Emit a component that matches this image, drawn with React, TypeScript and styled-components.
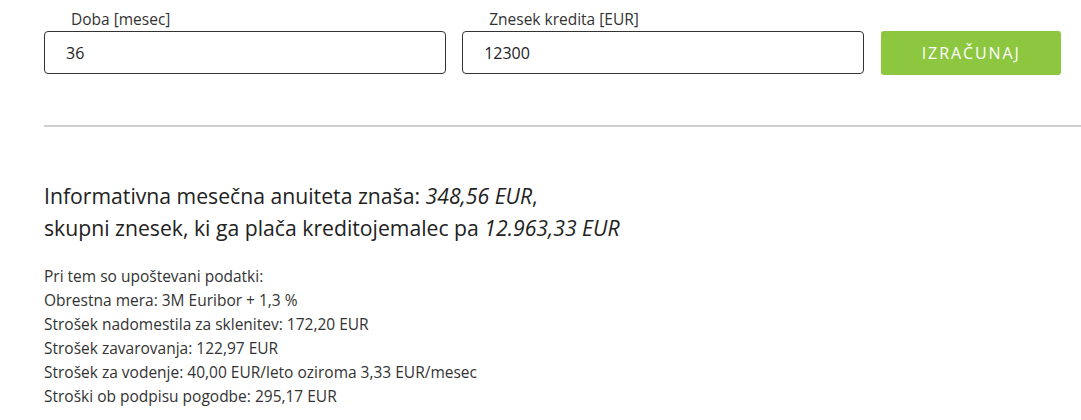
import React from "react";
import styled, { createGlobalStyle } from "styled-components";

const GlobalStyle = createGlobalStyle`
  body {
    margin: 0;
    background: #fff;
    font-family: "Open Sans", "Liberation Sans", sans-serif;
    color: #333;
  }
`;

const Page = styled.div`
  padding: 9px 0 0 44px;
`;

const FormRow = styled.div`
  display: flex;
  align-items: flex-end;
  gap: 16px;
  padding-right: 20px;
`;

const Field = styled.div`
  display: flex;
  flex-direction: column;
  width: 403px;
`;

const Label = styled.label`
  font-size: 15.5px;
  line-height: 20px;
  padding-left: 27px;
  margin-bottom: 2px;
  color: #333;
`;

const Input = styled.input`
  box-sizing: border-box;
  height: 43px;
  border: 1px solid #333;
  border-radius: 4px;
  padding: 0 21px;
  font-family: "Open Sans", "Liberation Sans", sans-serif;
  font-size: 16px;
  color: #222;
  outline: none;
`;

const Button = styled.button`
  box-sizing: border-box;
  width: 180px;
  height: 44px;
  margin-left: 1px;
  margin-bottom: -1px;
  border: none;
  border-radius: 3px;
  background: #8dc63f;
  color: #fff;
  font-family: "Open Sans", "Liberation Sans", sans-serif;
  font-size: 16px;
  letter-spacing: 1.9px;
  cursor: pointer;
`;

const Divider = styled.hr`
  border: none;
  height: 2px;
  background: #cfcfcf;
  margin: 51px 0 0;
`;

const Summary = styled.div`
  margin-top: 53px;
  font-size: 21.2px;
  line-height: 32px;
  color: #222;

  em {
    font-style: italic;
  }
`;

const Details = styled.div`
  margin-top: 20px;
  font-size: 15.5px;
  line-height: 24px;
  color: #333;
`;

const details = [
  "Pri tem so upoštevani podatki:",
  "Obrestna mera: 3M Euribor + 1,3 %",
  "Strošek nadomestila za sklenitev: 172,20 EUR",
  "Strošek zavarovanja: 122,97 EUR",
  "Strošek za vodenje: 40,00 EUR/leto oziroma 3,33 EUR/mesec",
  "Stroški ob podpisu pogodbe: 295,17 EUR",
];

export default function App() {
  return (
    <>
      <GlobalStyle />
      <Page>
        <FormRow>
          <Field>
            <Label>Doba [mesec]</Label>
            <Input defaultValue="36" />
          </Field>
          <Field>
            <Label>Znesek kredita [EUR]</Label>
            <Input defaultValue="12300" />
          </Field>
          <Button>IZRAČUNAJ</Button>
        </FormRow>
        <Divider />
        <Summary>
          <div>
            Informativna mesečna anuiteta znaša: <em>348,56 EUR</em>,
          </div>
          <div>
            skupni znesek, ki ga plača kreditojemalec pa <em>12.963,33 EUR</em>
          </div>
        </Summary>
        <Details>
          {details.map((d) => (
            <div key={d}>{d}</div>
          ))}
        </Details>
      </Page>
    </>
  );
}
